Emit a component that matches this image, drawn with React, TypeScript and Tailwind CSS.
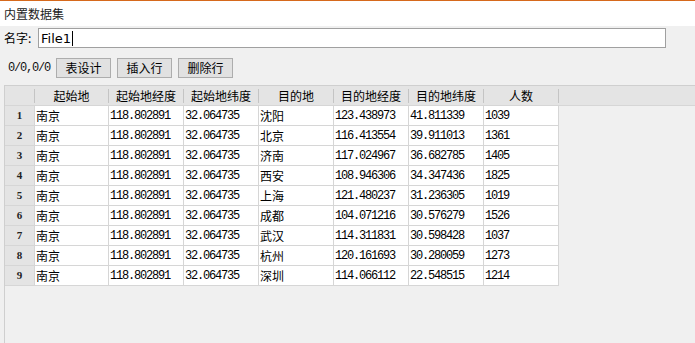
import React from 'react';

const cjk = { fontFamily: '"Noto Sans CJK SC", "Liberation Sans", sans-serif' };
const mono = { fontFamily: '"Liberation Mono", "Noto Sans CJK SC", monospace' };

const columns = ['起始地', '起始地经度', '起始地纬度', '目的地', '目的地经度', '目的地纬度', '人数'];
const widths = ['w-[74px]', 'w-[75px]', 'w-[75px]', 'w-[75px]', 'w-[75px]', 'w-[75px]', 'w-[75px]'];

const rows = [
  ['南京', '118.802891', '32.064735', '沈阳', '123.438973', '41.811339', '1039'],
  ['南京', '118.802891', '32.064735', '北京', '116.413554', '39.911013', '1361'],
  ['南京', '118.802891', '32.064735', '济南', '117.024967', '36.682785', '1405'],
  ['南京', '118.802891', '32.064735', '西安', '108.946306', '34.347436', '1825'],
  ['南京', '118.802891', '32.064735', '上海', '121.480237', '31.236305', '1019'],
  ['南京', '118.802891', '32.064735', '成都', '104.071216', '30.576279', '1526'],
  ['南京', '118.802891', '32.064735', '武汉', '114.311831', '30.598428', '1037'],
  ['南京', '118.802891', '32.064735', '杭州', '120.161693', '30.280059', '1273'],
  ['南京', '118.802891', '32.064735', '深圳', '114.066112', '22.548515', '1214'],
];

// text columns use the CJK face, numeric columns the narrow mono face
const isText = (i: number) => i === 0 || i === 3;

const ToolButton: React.FC<{ label: string }> = ({ label }) => (
  <button
    className="w-[55px] h-[20px] bg-[#e1e1e1] border border-[#adadad] text-[12px] text-black flex items-center justify-center"
    style={cjk}
  >
    {label}
  </button>
);

export default function App() {
  return (
    <div className="w-[695px] h-[343px] bg-[#f0f0f0] border-t border-[#d6691c] overflow-hidden flex flex-col">
      <div className="h-[25px] bg-white flex items-center pl-[4px] text-[12px] text-[#222]" style={cjk}>
        内置数据集
      </div>

      <div className="mt-[2px] flex items-center h-[20px]">
        <span className="pl-[4px] w-[38px] text-[12px] text-black" style={cjk}>
          名字:
        </span>
        <div className="w-[628px] h-[20px] bg-white border border-[#a0a0a0] flex items-center pl-[2px]">
          <span className="text-[13px] text-black leading-none" style={{ fontFamily: '"DejaVu Sans", sans-serif' }}>
            File1
          </span>
          <span className="w-px h-[15px] bg-black ml-[1px]" />
        </div>
      </div>

      <div className="mt-[10px] h-[20px] flex items-center">
        <span className="pl-[8px] w-[56px] text-[12px] tracking-[-1.2px] text-[#111]" style={mono}>
          0/0,0/0
        </span>
        <div className="flex gap-[6px]">
          <ToolButton label="表设计" />
          <ToolButton label="插入行" />
          <ToolButton label="删除行" />
        </div>
      </div>

      <div className="mt-[7px] ml-[4px] flex-1 border-l border-t border-[#cfcfcf]">
        <div className="flex h-[20px] bg-[#e4e4e4] border-b border-[#d6d6d6]">
          <div className="w-[30px] flex items-center justify-end">
            <span className="w-px h-[14px] bg-[#c4c4c4]" />
          </div>
          {columns.map((c, i) => (
            <div key={c} className={`${widths[i]} flex items-center`}>
              <span className="flex-1 text-center text-[12px] text-black" style={cjk}>
                {c}
              </span>
              <span className="w-px h-[14px] bg-[#c4c4c4]" />
            </div>
          ))}
        </div>

        {rows.map((r, ri) => (
          <div key={ri} className="flex h-[20px]">
            <div className="w-[30px] bg-[#e4e4e4] border-r border-b border-[#d6d6d6] flex items-center justify-center text-[11px] font-bold text-[#222]" style={{ fontFamily: '"Liberation Serif", serif' }}>
              {ri + 1}
            </div>
            {r.map((v, ci) => (
              <div
                key={ci}
                className={`${widths[ci]} bg-white border-r border-b border-[#d6d6d6] flex items-center pl-[1px] text-black ${isText(ci) ? 'text-[12px]' : 'text-[12px] tracking-[-1.2px]'}`}
                style={isText(ci) ? cjk : mono}
              >
                {v}
              </div>
            ))}
          </div>
        ))}
      </div>
    </div>
  );
}
